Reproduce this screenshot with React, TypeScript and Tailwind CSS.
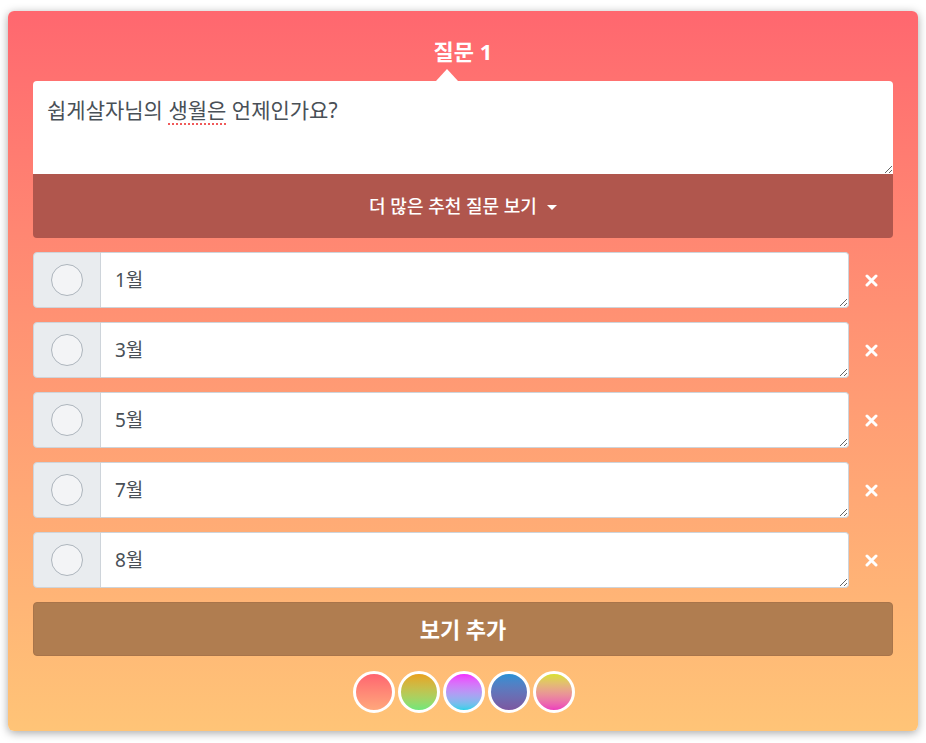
import { useState } from 'react'

const font = { fontFamily: '"Noto Sans", "Noto Sans CJK KR", sans-serif' }

const themes = [
  'bg-gradient-to-b from-[#ff6470] to-[#ffa77c]',
  'bg-gradient-to-b from-[#e8a21c] to-[#6ee77a]',
  'bg-gradient-to-b from-[#f22cff] to-[#1fd0e8]',
  'bg-gradient-to-b from-[#2790d4] to-[#7b57a0]',
  'bg-gradient-to-b from-[#d9e02a] to-[#ec3cbc]',
]

function RemoveIcon() {
  return (
    <svg width="13" height="13" viewBox="0 0 13 13">
      <path d="M2 2 L11 11 M11 2 L2 11" stroke="white" strokeWidth="3" strokeLinecap="round" />
    </svg>
  )
}

export default function App() {
  const [options] = useState(['1월', '3월', '5월', '7월', '8월'])

  return (
    <div className="min-h-screen bg-white pt-[11px] px-[8px]" style={font}>
      <div className="w-[910px] rounded-[6px] bg-gradient-to-b from-[#ff676f] to-[#ffc477] px-[25px] pt-[24px] pb-[18px] shadow-[0_2px_10px_rgba(0,0,0,0.35)]">
        <div className="h-[32px] text-center text-[22px] font-bold leading-[32px] text-white">질문 1</div>

        <div className="relative mt-[14px]">
          {/* pointer under the title */}
          <div className="absolute -top-[12px] left-[403px] h-0 w-0 border-x-[11px] border-b-[12px] border-x-transparent border-b-white"></div>
          <div className="h-[93px] resize-y overflow-auto rounded-t-[4px] bg-white px-[14px] pt-[13px] text-[21px] leading-[32px] text-[#495057]">
            쉽게살자님의{' '}
            <span className="underline decoration-dotted decoration-[#f05a5a] decoration-2 underline-offset-[5px]">생월은</span>{' '}
            언제인가요?
          </div>
          <button className="flex h-[64px] w-full items-center justify-center gap-[10px] rounded-b-[4px] bg-[#b0564d] text-[18px] font-medium text-white">
            더 많은 추천 질문 보기
            <span className="mt-[2px] h-0 w-0 border-x-[5px] border-t-[5px] border-x-transparent border-t-white"></span>
          </button>
        </div>

        <div className="mt-[14px] flex flex-col gap-[14px]">
          {options.map((opt, i) => (
            <div key={i} className="flex h-[56px] items-stretch">
              <div className="flex w-[68px] items-center justify-center rounded-l-[4px] border border-[#ced4da] bg-[#e9ecef]">
                <div className="h-[32px] w-[32px] rounded-full border border-[#adb5bd] bg-[#f3f4f6]"></div>
              </div>
              <textarea
                defaultValue={opt}
                className="h-[56px] flex-1 rounded-r-[4px] border border-l-0 border-[#ced4da] bg-white px-[14px] py-[13px] text-[19px] leading-[28px] text-[#495057] outline-none"
                style={font}
              />
              <div className="flex w-[44px] items-center justify-center">
                <RemoveIcon />
              </div>
            </div>
          ))}
        </div>

        <button className="mt-[14px] h-[54px] w-full rounded-[4px] border border-[#a8744a] bg-[#b07d50] text-[22px] font-semibold text-white">
          보기 추가
        </button>

        <div className="mt-[15px] flex justify-center gap-[3px] pl-[1px]">
          {themes.map((t, i) => (
            <div key={i} className={`h-[42px] w-[42px] rounded-full border-[3px] border-white ${t}`}></div>
          ))}
        </div>
      </div>
    </div>
  )
}
